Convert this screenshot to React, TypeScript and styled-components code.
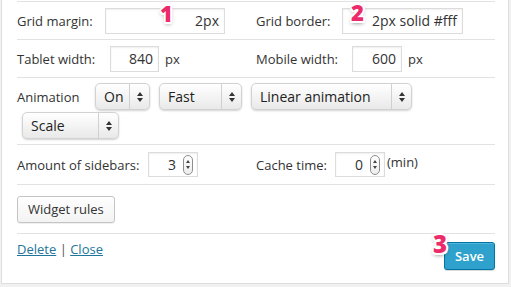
import React from 'react';
import styled, { createGlobalStyle } from 'styled-components';

const GlobalStyle = createGlobalStyle`
  html, body {
    margin: 0;
    padding: 0;
    background: #f1f1f1;
  }
  body {
    font-family: 'Open Sans', 'Liberation Sans', sans-serif;
    font-size: 13px;
    color: #333;
  }
`;

const Panel = styled.div`
  box-sizing: border-box;
  margin-left: 1px;
  width: 508px;
  height: 284px;
  padding: 1px 13px 0 15px;
  background: #fff;
  border: 1px solid #dedede;
  border-top: none;
`;

const Row = styled.div<{ $h: number }>`
  box-sizing: border-box;
  display: grid;
  grid-template-columns: 239px 1fr;
  align-items: center;
  height: ${(p) => p.$h}px;
  border-top: 1px solid #e2e2e2;
`;

const WrapRow = styled.div`
  display: flex;
  flex-wrap: wrap;
  align-items: center;
  row-gap: 2px;
  column-gap: 4px;
  padding: 5px 0 5px;
  border-top: 1px solid #e2e2e2;
`;

const Field = styled.div`
  display: flex;
  align-items: center;
`;

const Label = styled.span<{ $w: number }>`
  flex: 0 0 ${(p) => p.$w}px;
  white-space: nowrap;
`;

const InputWrap = styled.div`
  position: relative;
  display: flex;
`;

const TextBox = styled.div<{ $w: number; $h?: number }>`
  box-sizing: border-box;
  width: ${(p) => p.$w}px;
  height: ${(p) => p.$h || 26}px;
  padding: 0 5px;
  display: flex;
  align-items: center;
  justify-content: flex-end;
  gap: 7px;
  border: 1px solid #dcdcdc;
  box-shadow: inset 0 1px 2px rgba(0, 0, 0, 0.07);
  background: #fff;
  font-size: 14px;
  color: #333;
  white-space: nowrap;
  overflow: hidden;
`;

const Unit = styled.span`
  margin-left: 6px;
  font-size: 13px;
`;

const Sup = styled.span`
  align-self: flex-start;
  margin: 1px 0 0 2px;
  font-size: 13px;
`;

const Stepper = styled.span`
  box-sizing: border-box;
  width: 10px;
  height: 20px;
  margin-right: -1px;
  border: 1px solid #8e8e8e;
  border-radius: 5px;
  background: linear-gradient(#fff, #ededed);
  display: flex;
  flex-direction: column;
  align-items: center;
  justify-content: center;
  gap: 3px;
`;

const Tri = styled.span<{ $down?: boolean }>`
  width: 0;
  height: 0;
  border-left: 2px solid transparent;
  border-right: 2px solid transparent;
  ${(p) => (p.$down ? 'border-top: 3px solid #444;' : 'border-bottom: 3px solid #444;')}
`;

const SelectBox = styled.div<{ $w: number; $ml?: number }>`
  box-sizing: border-box;
  width: ${(p) => p.$w}px;
  height: 27px;
  margin-left: ${(p) => p.$ml ?? 5}px;
  display: flex;
  align-items: stretch;
  border: 1px solid #d2d2d2;
  border-radius: 5px;
  background: linear-gradient(#ffffff, #e9e9e9);
  box-shadow: 0 1px 2px rgba(0, 0, 0, 0.18);
  font-size: 14px;
  color: #222;
`;

const SelectText = styled.span`
  flex: 1;
  padding-left: 8px;
  display: flex;
  align-items: center;
  white-space: nowrap;
`;

const SelectArrow = styled.span`
  flex: 0 0 19px;
  border-left: 1px solid #d0d0d0;
  display: flex;
  flex-direction: column;
  align-items: center;
  justify-content: center;
  gap: 2px;
`;

const Arrow = styled.span<{ $down?: boolean }>`
  width: 0;
  height: 0;
  border-left: 3px solid transparent;
  border-right: 3px solid transparent;
  ${(p) => (p.$down ? 'border-top: 4px solid #333;' : 'border-bottom: 4px solid #333;')}
`;

const Button = styled.button`
  box-sizing: border-box;
  height: 27px;
  padding: 0 10px;
  font-family: inherit;
  font-size: 13px;
  color: #333;
  border: 1px solid #c4c4c4;
  border-radius: 3px;
  background: linear-gradient(#fefefe, #f3f3f3);
  box-shadow: 0 1px 0 rgba(0, 0, 0, 0.06);
`;

const Footer = styled.div`
  display: flex;
  justify-content: space-between;
  align-items: flex-start;
  height: 49px;
  padding-top: 5px;
  box-sizing: border-box;
  border-top: 1px solid #e2e2e2;
`;

const Links = styled.div`
  line-height: 20px;
  color: #555;
`;

const A = styled.a`
  color: #21759b;
  text-decoration: underline;
`;

const SaveWrap = styled.div`
  position: relative;
  margin-top: 3px;
`;

const SaveButton = styled.button`
  box-sizing: border-box;
  width: 51px;
  height: 28px;
  font-family: inherit;
  font-size: 13px;
  font-weight: 600;
  color: #fff;
  border: 1px solid #0074a2;
  border-radius: 3px;
  background: #2ea2cc;
  box-shadow: inset 0 1px 0 rgba(120, 200, 230, 0.5), 0 1px 0 rgba(0, 0, 0, 0.15);
`;

const Badge = styled.span<{ $x: number; $y: number; $size?: number }>`
  position: absolute;
  left: ${(p) => p.$x}px;
  top: ${(p) => p.$y}px;
  font-family: 'Open Sans', sans-serif;
  font-weight: 800;
  font-size: ${(p) => p.$size || 22}px;
  line-height: 1;
  color: #ec2c6a;
  text-shadow:
    2px 0 0 #fff, -2px 0 0 #fff, 0 2px 0 #fff, 0 -2px 0 #fff,
    1.5px 1.5px 0 #fff, -1.5px 1.5px 0 #fff, 1.5px -1.5px 0 #fff, -1.5px -1.5px 0 #fff,
    0 2px 4px rgba(0, 0, 0, 0.55);
`;

const Select = ({ w, ml, children }: { w: number; ml?: number; children: React.ReactNode }) => (
  <SelectBox $w={w} $ml={ml}>
    <SelectText>{children}</SelectText>
    <SelectArrow>
      <Arrow />
      <Arrow $down />
    </SelectArrow>
  </SelectBox>
);

const NumberBox = ({ value }: { value: string }) => (
  <TextBox $w={50} $h={25}>
    <span>{value}</span>
    <Stepper>
      <Tri />
      <Tri $down />
    </Stepper>
  </TextBox>
);

export default function App() {
  return (
    <>
      <GlobalStyle />
      <Panel>
        <Row $h={38}>
          <Field>
            <Label $w={88}>Grid margin:</Label>
            <InputWrap>
              <TextBox $w={120}>2px</TextBox>
              <Badge $x={55} $y={-6}>1</Badge>
            </InputWrap>
          </Field>
          <Field>
            <Label $w={86}>Grid border:</Label>
            <InputWrap>
              <TextBox $w={121}>2px solid #fff</TextBox>
              <Badge $x={9} $y={-7}>2</Badge>
            </InputWrap>
          </Field>
        </Row>
        <Row $h={38}>
          <Field>
            <Label $w={93}>Tablet width:</Label>
            <TextBox $w={49}>840</TextBox>
            <Unit>px</Unit>
          </Field>
          <Field>
            <Label $w={96}>Mobile width:</Label>
            <TextBox $w={50}>600</TextBox>
            <Unit>px</Unit>
          </Field>
        </Row>
        <WrapRow>
          <Label $w={69}>Animation</Label>
          <Select w={55}>On</Select>
          <Select w={83}>Fast</Select>
          <Select w={161}>Linear animation</Select>
          <Select w={97}>Scale</Select>
        </WrapRow>
        <Row $h={40}>
          <Field>
            <Label $w={131}>Amount of sidebars:</Label>
            <NumberBox value="3" />
          </Field>
          <Field>
            <Label $w={79}>Cache time:</Label>
            <NumberBox value="0" />
            <Sup>(min)</Sup>
          </Field>
        </Row>
        <Row $h={49}>
          <Field>
            <Button>Widget rules</Button>
          </Field>
        </Row>
        <Footer>
          <Links>
            <A href="#">Delete</A> | <A href="#">Close</A>
          </Links>
          <SaveWrap>
            <SaveButton>Save</SaveButton>
            <Badge $x={-11} $y={-10} $size={24}>3</Badge>
          </SaveWrap>
        </Footer>
      </Panel>
    </>
  );
}
